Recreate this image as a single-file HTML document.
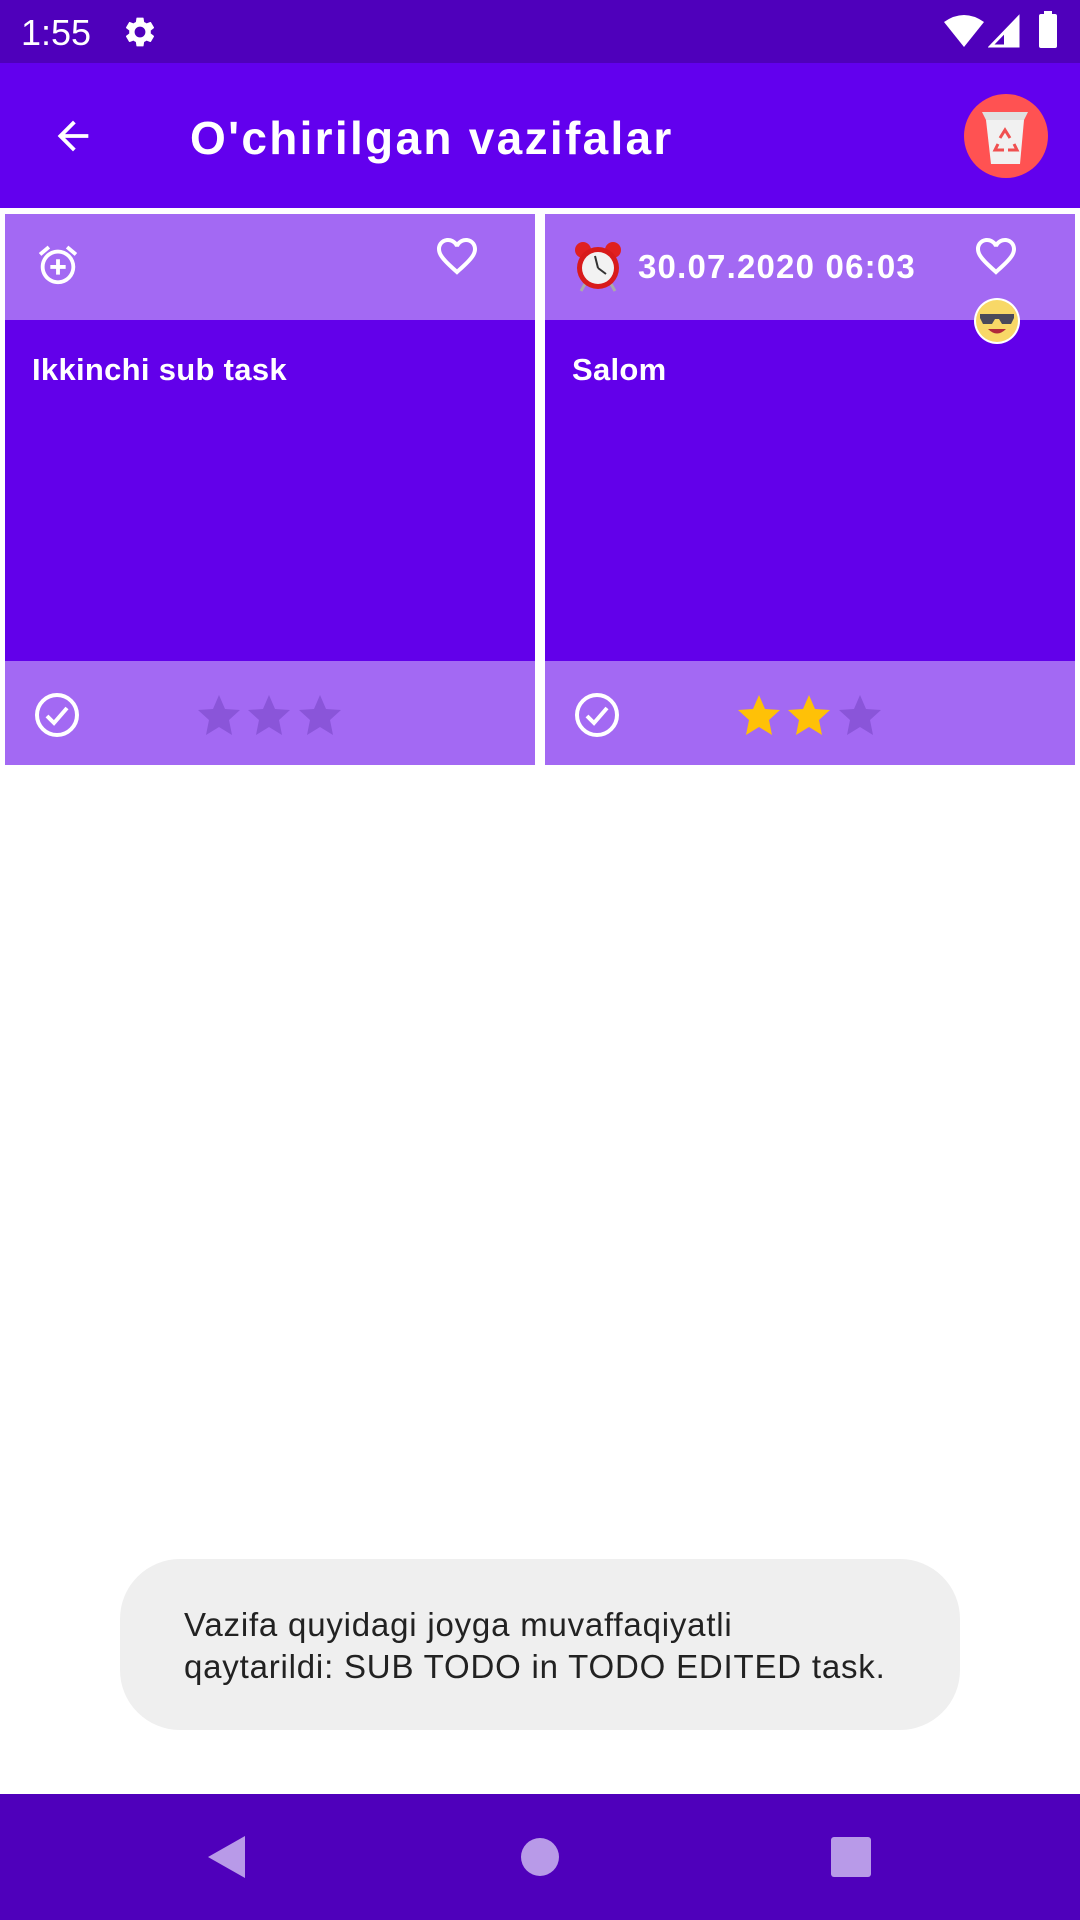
<!DOCTYPE html>
<html><head><meta charset="utf-8"><style>
*{margin:0;padding:0;box-sizing:border-box}
body{width:1080px;height:1920px;background:#fff;position:relative;overflow:hidden;font-family:"Liberation Sans",sans-serif}
.abs{position:absolute}
.sb{left:0;top:0;width:1080px;height:63px;background:#4f00bb}
.ab{left:0;top:63px;width:1080px;height:145px;background:#6200ee}
.card{top:214px;width:530px;height:551px;background:#6200ea}
.hd{left:0;top:0;width:100%;height:106px;background:#a369f3}
.ft{left:0;bottom:0;width:100%;height:104px;background:#a369f3}
.nav{left:0;top:1794px;width:1080px;height:126px;background:#4f00bb}
</style></head><body>
<div class="abs sb">
 <div class="abs" style="left:21px;top:12px;color:#fff;font-size:36px">1:55</div>
 <svg class="abs" style="left:122px;top:14px" width="36" height="36" viewBox="0 0 24 24"><path fill="#fff" d="M19.14 12.94c.04-.3.06-.61.06-.94 0-.32-.02-.64-.07-.94l2.030-1.58a.49.49 0 00.12-.61l-1.92-3.32a.49.49 0 00-.59-.22l-2.39.96c-.5-.38-1.03-.7-1.62-.94l-.36-2.54a.48.48 0 00-.48-.41h-3.84c-.24 0-.43.17-.47.41l-.36 2.54c-.59.24-1.130.57-1.62.94l-2.39-.96a.48.48 0 00-.59.22L2.74 8.87c-.12.21-.08.47.12.61l2.03 1.58c-.05.3-.09.63-.09.94s.02.64.07.94l-2.03 1.58a.49.49 0 00-.12.61l1.92 3.32c.12.22.37.29.59.22l2.39-.96c.5.38 1.03.7 1.62.94l.36 2.54c.05.24.24.41.48.41h3.84c.24 0 .44-.17.47-.41l.36-2.54c.59-.24 1.13-.56 1.62-.94l2.39.96c.22.08.47 0 .59-.22l1.92-3.32c.12-.22.07-.47-.12-.61l-2.01-1.58zM12 15.6A3.6 3.6 0 1112 8.4a3.6 3.6 0 010 7.2z"/></svg>
 <svg class="abs" style="left:944px;top:14px" width="40" height="34" viewBox="0 0 40 34"><path fill="#fff" d="M0 8Q20-6 40 8L20 33Z"/></svg>
 <svg class="abs" style="left:988px;top:14px" width="32" height="34" viewBox="0 0 32 34"><path fill="none" stroke="#fff" stroke-width="3" d="M3 32L30 4V32Z"/><path fill="#fff" d="M16 18L30 4V32H16Z"/></svg>
 <div class="abs" style="left:1039px;top:14px;width:18px;height:34px;background:#fff;border-radius:2px"></div>
 <div class="abs" style="left:1044px;top:11px;width:8px;height:4px;background:#fff"></div>
</div>
<div class="abs ab">
 <svg class="abs" style="left:50px;top:50px" width="46" height="46" viewBox="0 0 24 24"><path fill="#fff" d="M20 11H7.83l5.59-5.59L12 4l-8 8 8 8 1.41-1.41L7.83 13H20v-2z"/></svg>
 <div class="abs" style="left:190px;top:48px;color:#fff;font-size:46px;font-weight:bold;letter-spacing:2.3px">O'chirilgan vazifalar</div>
 <svg class="abs" style="left:964px;top:31px" width="84" height="84" viewBox="0 0 84 84"><circle cx="42" cy="42" r="42" fill="#ff5252"/><path d="M18 18H64L60 26H22Z" fill="#e0e0e0"/><path d="M22 26H60L56 70H27Z" fill="#f1f1f1"/><path d="M36 44l5-8 5 8M34 50l-3 6h9M50 50l3 6h-9" fill="none" stroke="#f05050" stroke-width="3"/></svg>
</div>
<div class="abs card" style="left:5px">
 <div class="abs hd">
  <svg class="abs" style="left:30px;top:28px" width="46" height="46" viewBox="0 0 24 24"><path fill="#fff" d="M7.88 3.39L6.6 1.86 2 5.71l1.29 1.53 4.59-3.85zM22 5.72l-4.6-3.86-1.29 1.53 4.6 3.86L22 5.72zM12 4c-4.97 0-9 4.03-9 9s4.02 9 9 9a9 9 0 000-18zm0 16c-3.870 0-7-3.13-7-7s3.13-7 7-7 7 3.13 7 7-3.13 7-7 7zm1-11h-2v3H8v2h3v3h2v-3h3v-2h-3V9z"/></svg>
  <svg class="abs" style="left:428px;top:18px" width="48" height="48" viewBox="0 0 24 24"><path fill="#fff" d="M16.5 3c-1.74 0-3.41.81-4.5 2.09C10.91 3.81 9.24 3 7.5 3 4.42 3 2 5.42 2 8.5c0 3.78 3.4 6.86 8.55 11.54L12 21.35l1.45-1.32C18.6 15.36 22 12.28 22 8.5 22 5.42 19.58 3 16.5 3zm-4.4 15.55l-.1.1-.1-.1C7.14 14.24 4 11.39 4 8.5 4 6.5 5.5 5 7.5 5c1.54 0 3.04.99 3.57 2.36h1.87C13.46 5.99 14.96 5 16.5 5c2 0 3.5 1.5 3.5 3.5 0 2.89-3.14 5.74-7.9 10.05z"/></svg>
 </div>
 <div class="abs" style="left:27px;top:138px;color:#fff;font-size:31px;font-weight:bold;letter-spacing:0.3px">Ikkinchi sub task</div>
 <div class="abs ft">
  <svg class="abs" style="left:28px;top:30px" width="48" height="48" viewBox="0 0 48 48"><circle cx="24" cy="24" r="20" fill="none" stroke="#fff" stroke-width="4"/><path d="M14 25l7 7 13-15" fill="none" stroke="#fff" stroke-width="4"/></svg>
  <svg class="abs" style="left:192px;top:32px" width="150" height="44" viewBox="0 0 150 44"><g fill="#8a55d9"><path d="M22 2l6 14 15 1-11 10 3 15-13-8-13 8 3-15L1 17l15-1z"/><path transform="translate(50 0)" d="M22 2l6 14 15 1-11 10 3 15-13-8-13 8 3-15L1 17l15-1z"/><path transform="translate(101 0)" d="M22 2l6 14 15 1-11 10 3 15-13-8-13 8 3-15L1 17l15-1z"/></g></svg>
 </div>
</div>
<div class="abs card" style="left:545px">
 <div class="abs hd">
  <svg class="abs" style="left:28px;top:26px" width="50" height="52" viewBox="0 0 50 52"><circle cx="10" cy="10" r="8" fill="#e02020"/><circle cx="40" cy="10" r="8" fill="#e02020"/><path d="M12 44l-4 7M38 44l4 7" stroke="#aaa" stroke-width="3"/><circle cx="25" cy="28" r="21" fill="#d81b1b"/><circle cx="25" cy="28" r="16" fill="#f2f2f2"/><path d="M25 28L22 16M25 28l8 6" stroke="#333" stroke-width="2"/></svg>
  <div class="abs" style="left:93px;top:34px;color:#fff;font-size:33px;font-weight:bold;letter-spacing:1.2px">30.07.2020 06:03</div>
  <svg class="abs" style="left:427px;top:18px" width="48" height="48" viewBox="0 0 24 24"><path fill="#fff" d="M16.5 3c-1.74 0-3.41.81-4.5 2.09C10.91 3.81 9.24 3 7.5 3 4.42 3 2 5.42 2 8.5c0 3.78 3.4 6.86 8.55 11.54L12 21.35l1.45-1.32C18.6 15.36 22 12.28 22 8.5 22 5.42 19.58 3 16.5 3zm-4.4 15.55l-.1.1-.1-.1C7.14 14.24 4 11.39 4 8.5 4 6.5 5.5 5 7.5 5c1.54 0 3.04.99 3.57 2.36h1.87C13.46 5.99 14.96 5 16.5 5c2 0 3.5 1.5 3.5 3.5 0 2.89-3.14 5.74-7.9 10.05z"/></svg>
 </div>
 <svg class="abs" style="left:427px;top:82px" width="50" height="50" viewBox="0 0 50 50"><circle cx="25" cy="25" r="23" fill="#fff"/><circle cx="25" cy="25" r="21" fill="#f8d867"/><path d="M8 18h34v4l-3 6h-9l-3-5h-4l-3 5h-9L8 22z" fill="#4a4a5a"/><path d="M16 33q9 9 18 0z" fill="#b02a3a"/></svg>
 <div class="abs" style="left:27px;top:138px;color:#fff;font-size:31px;font-weight:bold;letter-spacing:0.3px">Salom</div>
 <div class="abs ft">
  <svg class="abs" style="left:28px;top:30px" width="48" height="48" viewBox="0 0 48 48"><circle cx="24" cy="24" r="20" fill="none" stroke="#fff" stroke-width="4"/><path d="M14 25l7 7 13-15" fill="none" stroke="#fff" stroke-width="4"/></svg>
  <svg class="abs" style="left:192px;top:32px" width="150" height="44" viewBox="0 0 150 44"><path fill="#ffc107" d="M22 2l6 14 15 1-11 10 3 15-13-8-13 8 3-15L1 17l15-1z"/><path fill="#ffc107" transform="translate(50 0)" d="M22 2l6 14 15 1-11 10 3 15-13-8-13 8 3-15L1 17l15-1z"/><path fill="#8a55d9" transform="translate(101 0)" d="M22 2l6 14 15 1-11 10 3 15-13-8-13 8 3-15L1 17l15-1z"/></svg>
 </div>
</div>
<div class="abs" style="left:120px;top:1559px;width:840px;height:171px;background:#efefef;border-radius:60px"></div>
<div class="abs" style="left:184px;top:1604px;color:#222;font-size:33px;line-height:42px;letter-spacing:0.8px">Vazifa quyidagi joyga muvaffaqiyatli<br>qaytarildi: SUB TODO in TODO EDITED task.</div>
<div class="abs nav">
 <svg class="abs" style="left:205px;top:40px" width="42" height="46" viewBox="0 0 42 46"><path d="M40 2V44L3 23Z" fill="#b89ae8"/></svg>
 <div class="abs" style="left:521px;top:44px;width:38px;height:38px;border-radius:50%;background:#b89ae8"></div>
 <div class="abs" style="left:831px;top:43px;width:40px;height:40px;border-radius:3px;background:#b89ae8"></div>
</div>
</body></html>
